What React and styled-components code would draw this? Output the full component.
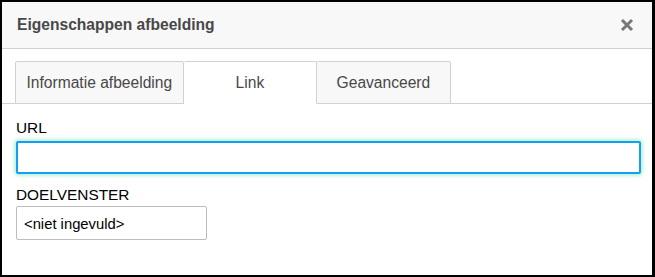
import React, { useState } from 'react';
import styled, { createGlobalStyle } from 'styled-components';

const GlobalStyle = createGlobalStyle`
  html, body {
    margin: 0;
    padding: 0;
    background: #000;
  }
  body {
    font-family: "Liberation Sans", Arial, sans-serif;
  }
`;

const Dialog = styled.div`
  margin: 2px 3px 0 2px;
  height: 273px;
  background: #fff;
  display: flex;
  flex-direction: column;
  box-sizing: border-box;
`;

const Header = styled.div`
  height: 46px;
  flex-shrink: 0;
  display: flex;
  align-items: center;
  justify-content: space-between;
  padding: 0 18px 0 15px;
  background: #f8f8f8;
  border-bottom: 1px solid #d1d1d1;
`;

const Title = styled.div`
  font-size: 15.6px;
  font-weight: bold;
  color: #484848;
`;

const Close = styled.button`
  border: 0;
  background: none;
  padding: 0;
  width: 14px;
  height: 14px;
  display: flex;
  cursor: pointer;
`;

const TabBar = styled.div`
  display: flex;
  padding: 12px 0 0 13px;
  border-bottom: 1px solid #d1d1d1;
`;

const Tab = styled.button`
  box-sizing: border-box;
  min-width: 133.5px;
  height: 43px;
  margin-bottom: -1px;
  padding: 1px 10.5px 0;
  font-family: inherit;
  font-size: 15.6px;
  color: #484848;
  background: ${p => (p.$active ? '#fff' : '#f8f8f8')};
  border: 1px solid #d1d1d1;
  border-bottom-color: ${p => (p.$active ? '#fff' : '#d1d1d1')};
  border-left-width: ${p => (p.$first ? '1px' : '0')};
  border-radius: 2px 2px 0 0;
  cursor: pointer;
  outline: none;
`;

const Body = styled.div`
  padding: 16px 11px 0 14px;
  display: flex;
  flex-direction: column;
`;

const Label = styled.label`
  display: block;
  font-size: 15.4px;
  line-height: 16px;
  color: #000;
  margin-bottom: ${p => p.$gap}px;
`;

const TextInput = styled.input`
  box-sizing: border-box;
  width: 100%;
  height: 33px;
  border: 2px solid #139ff7;
  border-radius: 2px;
  box-shadow: 0 0 4px 1px rgba(120, 230, 170, 0.75);
  outline: none;
  padding: 0 8px;
  font-family: inherit;
  font-size: 14.8px;
  margin-bottom: 13px;
`;

const Select = styled.select`
  box-sizing: border-box;
  width: 191px;
  height: 34px;
  border: 1px solid #bcbcbc;
  border-radius: 2px;
  background: #fff;
  padding: 2px 0 0 7px;
  font-family: inherit;
  font-size: 14.8px;
  color: #000;
  appearance: none;
  outline: none;
`;

const tabs = ['Informatie afbeelding', 'Link', 'Geavanceerd'];

export default function App() {
  const [active, setActive] = useState(1);
  return (
    <>
      <GlobalStyle />
      <Dialog>
        <Header>
          <Title>Eigenschappen afbeelding</Title>
          <Close aria-label="Sluiten">
            <svg width="14" height="14" viewBox="0 0 14 14">
              <path d="M2 2 L12 12 M12 2 L2 12" stroke="#777" strokeWidth="3" />
            </svg>
          </Close>
        </Header>
        <TabBar>
          {tabs.map((t, i) => (
            <Tab key={t} $first={i === 0} $active={i === active} onClick={() => setActive(i)}>
              {t}
            </Tab>
          ))}
        </TabBar>
        <Body>
          <Label $gap={5}>URL</Label>
          <TextInput type="text" />
          <Label $gap={3}>DOELVENSTER</Label>
          <Select defaultValue="">
            <option value="">&lt;niet ingevuld&gt;</option>
          </Select>
        </Body>
      </Dialog>
    </>
  );
}
